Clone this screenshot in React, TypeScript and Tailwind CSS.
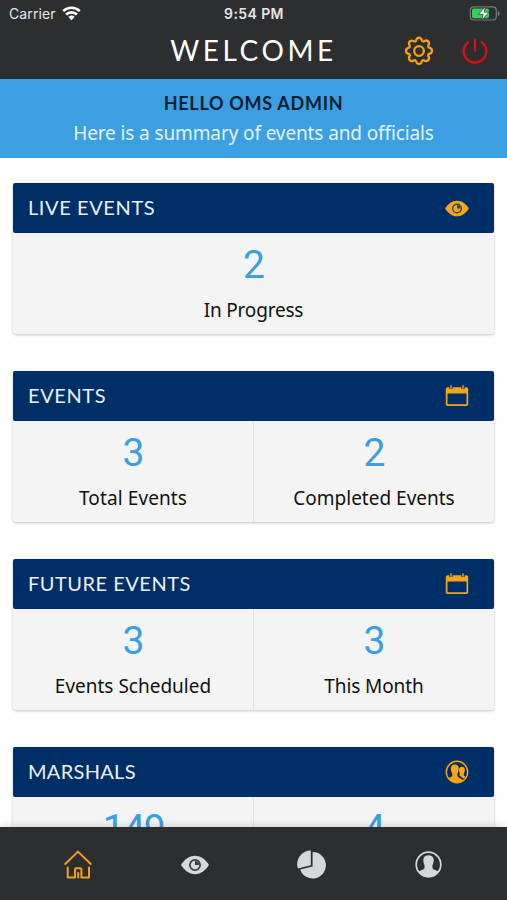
import type { ReactNode } from 'react';

interface Stat {
    value: string;
    valueClass?: string;
    label?: string;
    labelClass?: string;
}

interface SummaryCardProps {
    title: string;
    titleClass: string;
    icon: ReactNode;
    stats: Stat[];
}

const heading = "font-['Lato','Open_Sans',sans-serif]";
const body = "font-['Noto_Sans','Open_Sans',sans-serif]";

function WifiIcon() {
    return (
        <svg width="19" height="15" viewBox="0 0 19 15" fill="none" stroke="#fff" strokeWidth="2.6">
            <path d="M1.2 5.1a12 12 0 0 1 16.6 0" />
            <path d="M4.1 8.5a7.8 7.8 0 0 1 10.8 0" />
            <path d="M9.5 14.2 6.4 11a4.5 4.5 0 0 1 6.2 0Z" fill="#fff" stroke="none" />
        </svg>
    );
}

function BatteryIcon() {
    return (
        <svg width="31" height="15" viewBox="0 0 31 15">
            <rect x="1.3" y="0.8" width="26" height="13.2" rx="3.5" fill="none" stroke="#77797b" strokeWidth="1.2" />
            <rect x="3" y="2.5" width="17" height="9.8" rx="1.8" fill="#34d15b" />
            <path d="M28.8 5v5c1.2-.4 2-1.3 2-2.5s-.8-2.1-2-2.5Z" fill="#77797b" />
            <path d="m16.4.8-7 7.5h4.8l-1.5 6 7.3-8.1h-4.8Z" fill="#fff" stroke="#2d2e30" strokeWidth="0.7" />
        </svg>
    );
}

function GearIcon() {
    return (
        <svg width="30" height="30" viewBox="0 0 30 30" fill="none" stroke="#f5a01c" strokeWidth="2.3" strokeLinejoin="round">
            <path d="M12.1 4.3c.5-1.9 1-2.7 2.9-2.7s2.4.8 2.9 2.7c.3 1 1.4 1.4 2.3.9 1.7-1 2.7-1.2 4 .2s1.2 2.3.2 4c-.5.9-.1 2 .9 2.3 1.9.5 2.7 1.4 2.7 3.3s-.8 2.4-2.7 2.9c-1 .3-1.4 1.4-.9 2.3 1 1.7 1.2 2.7-.2 4s-2.3 1.2-4 .2c-.9-.5-2-.1-2.3.9-.5 1.9-1 2.7-2.9 2.7s-2.4-.8-2.9-2.7c-.3-1-1.400-1.400-2.300-.9-1.700 1-2.700 1.200-4-.2s-1.200-2.300-.2-4c.5-.9.1-2-.9-2.300-1.900-.5-2.700-1-2.700-2.900s.8-2.800 2.700-3.300c1-.3 1.400-1.400.9-2.300-1-1.700-1.200-2.700.2-4s2.300-1.200 4-.2c.9.5 2 .1 2.300-.9Z" />
            <circle cx="15" cy="15" r="4.8" />
        </svg>
    );
}

function PowerIcon() {
    return (
        <svg width="26" height="26" viewBox="0 0 26 26" fill="none" stroke="#dc1014" strokeWidth="2.3" strokeLinecap="round">
            <path d="M13 1.5v11.2" />
            <path d="M6.1 4.3a11.3 11.3 0 1 0 13.8 0" />
        </svg>
    );
}

function EyeIcon({ className, pupil }: { className: string; pupil: string }) {
    return (
        <svg className={className} viewBox="0 0 28 20">
            <path d="M0 10C3 5 8 .8 14 .8S25 5 28 10c-3 5-8 9.2-14 9.2S3 15 0 10Z" fill="currentColor" />
            <circle cx="14" cy="10" r="5.1" fill="none" stroke={pupil} strokeWidth="1.7" />
            <path d="M14 6v4h4a4 4 0 0 0-4-4Z" fill={pupil} />
        </svg>
    );
}

function CalendarIcon() {
    return (
        <svg width="24" height="22" viewBox="0 0 24 22">
            <rect x="0.8" y="2.2" width="22.4" height="18.8" rx="1.7" fill="#f5a51a" />
            <rect x="2.5" y="8.5" width="19" height="10.8" rx="0.5" fill="#002f67" />
            <path d="M6 1v3M18 1v3" stroke="#002f67" strokeWidth="3.2" />
            <path d="M6 .3v3.4M18 .3v3.4" stroke="#d6993a" strokeWidth="1.5" />
        </svg>
    );
}

function PeopleIcon() {
    return (
        <svg width="24" height="24" viewBox="0 0 24 24">
            <circle cx="12" cy="12" r="10.7" fill="none" stroke="#ffa60a" strokeWidth="1.4" />
            <path d="M3.2 18.4c1.3-1 3.3-1.200 3.900-2.200.4-.9.3-1.900 0-2.800-.9-1.800-1.400-3.900-1.200-5.700.3-2 1.700-3.200 3.900-3.200s3.600 1.200 3.900 3.200c.2 1.800-.3 3.900-1.200 5.700-.3.900-.4 1.900 0 2.800.8 1.600 4.300 2.200 5.700 4.400l-.4 1.200C12 24 6.200 22 3.200 18.400Z" fill="#ffa60a" />
            <path d="M14.900 13.600c-.8-1.500-1.100-2.900-.9-4.400.2-1.500 1.300-2.400 2.900-2.400s2.700.9 2.900 2.400c.2 1.500-.2 2.900-.9 4.400-.3.900-.3 1.700.1 2.200l1.500 1-1.700 2c-1.200-1.300-3-2-4-3-.4-.6-.2-1.400.1-2.200Z" fill="#ffa60a" />
        </svg>
    );
}

function HomeIcon() {
    return (
        <svg width="28" height="29" viewBox="0 0 28 29" fill="none" stroke="#f5a01c" strokeWidth="2" strokeLinecap="round" strokeLinejoin="round">
            <path d="M1.3 14 14 1.6 26.7 14" />
            <path d="M3.7 17.6v10h7.3v-8q0-1.400 1.400-1.400h3.600q1.400 0 1.400 1.400v8H25v-10M14.200 23v4.400" />
        </svg>
    );
}

function PieIcon() {
    return (
        <svg width="29" height="29" viewBox="0 0 29 29" fill="#d5d7d8">
            <path d="M13.800.5v14.800L.9 18.500A13.600 13.600 0 0 1 13.800.5Z" />
            <path d="M15.600 2.100A13.200 13.200 0 1 1 3.200 19.500l12.400-3.100Z" />
        </svg>
    );
}

function ProfileIcon() {
    return (
        <svg width="27" height="27" viewBox="0 0 27 27">
            <circle cx="13.5" cy="13.5" r="12.3" fill="none" stroke="#d5d7d8" strokeWidth="1.7" />
            <path d="M3.6 20.5c1.8-1.4 4.9-1.300 5.600-2.700.5-1 .5-2.600.2-3.700-.8-1.800-1.300-4-1-6.100.4-2.500 2.300-3.800 5.100-3.800s4.700 1.300 5.100 3.800c.3 2.100-.2 4.300-1 6.100-.3 1.100-.3 2.700.2 3.700.7 1.400 3.800 1.300 5.600 2.700-4.400 7.300-15.400 7.300-19.800 0Z" fill="#d5d7d8" />
        </svg>
    );
}

function SummaryCard({ title, titleClass, icon, stats }: SummaryCardProps) {
    return (
        <section className="h-[151px] shrink-0 rounded-[3px] bg-[#f4f4f4] shadow-[0_1px_3px_rgba(0,0,0,0.25)]">
            <div className="flex h-[50px] items-center justify-between rounded-[2px] bg-[#002f67] pr-[25px] pl-[15px]">
                <h2 className={`${heading} pb-[2px] text-[20px] whitespace-nowrap text-[#e9f0f8] ${titleClass}`}>{title}</h2>
                <div className="flex w-6 justify-center">{icon}</div>
            </div>
            <div className="flex h-[101px] divide-x divide-[#e2e2e2]">
                {stats.map((stat, i) => (
                    <div key={i} className="flex flex-1 flex-col items-center pt-[8px]">
                        <span className={`pl-[1px] font-['Roboto',sans-serif] text-[39px] leading-[48px] text-[#3b9fe2] ${stat.valueClass ?? ''}`}>
                            {stat.value}
                        </span>
                        {stat.label && (
                            <span className={`${body} mt-[7px] text-[19px] leading-7 whitespace-nowrap text-[#111] ${stat.labelClass ?? ''}`}>
                                {stat.label}
                            </span>
                        )}
                    </div>
                ))}
            </div>
        </section>
    );
}

export default function App() {
    return (
        <div className="flex h-[900px] w-[507px] flex-col overflow-hidden bg-white">
            <header className="h-[79px] shrink-0 bg-[#2d2e30]">
                <div className="grid h-[27px] grid-cols-3 items-center pr-[7px] pl-[9px] font-['Inter',sans-serif] text-[14px] text-[#e6e6e6]">
                    <div className="flex items-center gap-[6px]">
                        <span className="tracking-[0.1px]">Carrier</span>
                        <WifiIcon />
                    </div>
                    <span className="pr-[1px] text-center font-semibold tracking-[0.4px]">9:54 PM</span>
                    <div className="flex justify-end">
                        <BatteryIcon />
                    </div>
                </div>
                <div className="grid h-[48px] grid-cols-[1fr_170px_1fr] items-center">
                    <span />
                    <h1 className={`${heading} flex justify-center pb-[3px] text-[28px] tracking-[3.6px] whitespace-nowrap text-white`}>WELCOME</h1>
                    <div className="flex items-center justify-end gap-[28px] pr-[19px] pb-[1px]">
                        <GearIcon />
                        <PowerIcon />
                    </div>
                </div>
            </header>

            <div className="flex h-[79px] shrink-0 flex-col items-center bg-[#3b9fe2] pt-[12px]">
                <p className={`${heading} text-[18px] leading-6 font-bold tracking-[0.7px] text-[#08202f]`}>HELLO OMS ADMIN</p>
                <p className={`${body} mt-[4px] text-[19px] leading-7 tracking-[-0.12px] whitespace-nowrap text-[#e3f3ff]`}>
                    Here is a summary of events and officials
                </p>
            </div>

            <main className="flex min-h-0 flex-1 flex-col gap-[37px] overflow-hidden px-[13px] pt-[25px]">
                <SummaryCard
                    title="LIVE EVENTS"
                    titleClass="tracking-[0.6px]"
                    icon={<EyeIcon className="h-[17px] w-6 text-[#f7a51c]" pupil="#33455a" />}
                    stats={[{ value: '2', label: 'In Progress', labelClass: 'tracking-[-0.2px]' }]}
                />
                <SummaryCard
                    title="EVENTS"
                    titleClass="tracking-[0.6px]"
                    icon={<CalendarIcon />}
                    stats={[
                        { value: '3', label: 'Total Events', labelClass: 'tracking-[0.1px]' },
                        { value: '2', label: 'Completed Events' },
                    ]}
                />
                <SummaryCard
                    title="FUTURE EVENTS"
                    titleClass="tracking-[0.5px]"
                    icon={<CalendarIcon />}
                    stats={[
                        { value: '3', label: 'Events Scheduled' },
                        { value: '3', label: 'This Month', labelClass: 'tracking-[-0.1px]' },
                    ]}
                />
                <SummaryCard
                    title="MARSHALS"
                    titleClass="tracking-[0.3px]"
                    icon={<PeopleIcon />}
                    stats={[{ value: '149', valueClass: 'tracking-[-1.5px]' }, { value: '4' }]}
                />
            </main>

            <nav className="z-10 grid h-[73px] shrink-0 grid-cols-4 items-center bg-[#2d2e30] pt-[2px] pr-[20px] pl-[20px] shadow-[0_-2px_8px_rgba(0,0,0,0.12)]">
                <div className="flex justify-center"><HomeIcon /></div>
                <div className="flex justify-center"><EyeIcon className="h-5 w-7 text-[#d5d7d8]" pupil="#3b3d3f" /></div>
                <div className="flex justify-center"><PieIcon /></div>
                <div className="flex justify-center"><ProfileIcon /></div>
            </nav>
        </div>
    );
}
